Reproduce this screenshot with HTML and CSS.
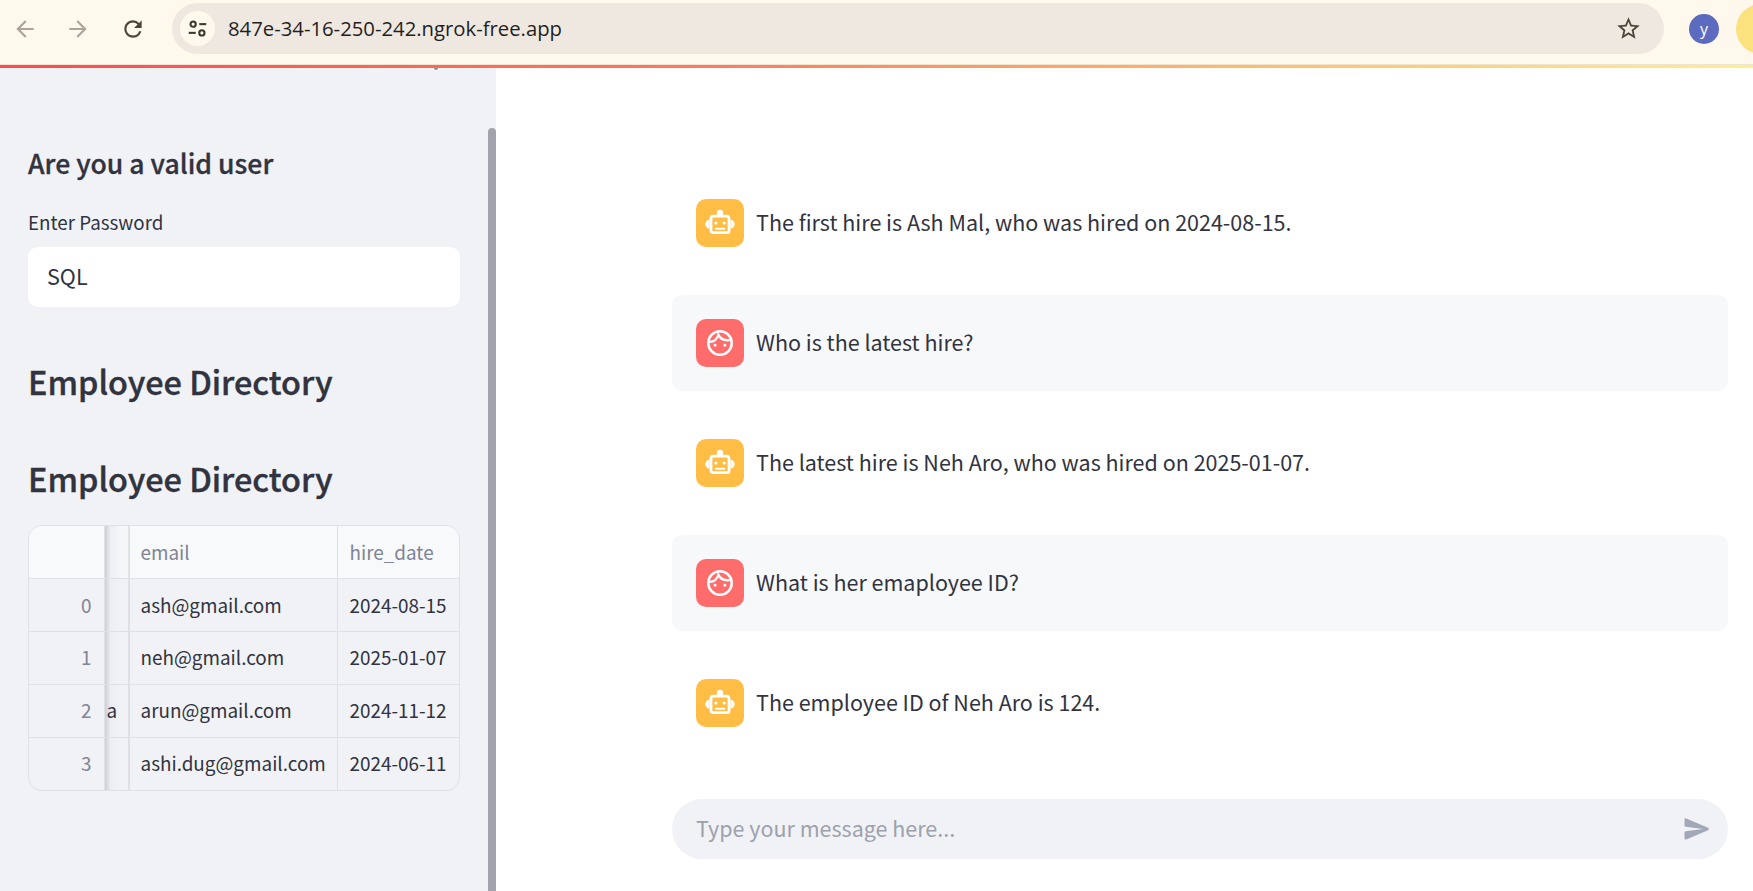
FILE: index.html
```html
<!DOCTYPE html>
<html lang="en">
<head>
<meta charset="UTF-8">
<title>Employee Directory</title>
<link rel="stylesheet" href="styles.css">
</head>
<body>
<header class="toolbar">
    <svg class="nav-icon dim" viewBox="0 0 24 24"><path d="M20 11H7.83l5.59-5.59L12 4l-8 8 8 8 1.41-1.41L7.83 13H20z"/></svg>
    <svg class="nav-icon dim" viewBox="0 0 24 24"><path d="M12 4l-1.41 1.41L16.17 11H4v2h12.17l-5.58 5.59L12 20l8-8z"/></svg>
    <svg class="nav-icon" viewBox="0 0 24 24"><path d="M17.65 6.35A7.958 7.958 0 0 0 12 4c-4.42 0-7.99 3.58-7.99 8s3.57 8 7.99 8c3.73 0 6.84-2.55 7.73-6h-2.08A5.99 5.99 0 0 1 12 18c-3.31 0-6-2.69-6-6s2.69-6 6-6c1.66 0 3.14.69 4.22 1.78L13 11h7V4l-2.35 2.35z"/></svg>
    <div class="omnibox">
        <span class="site-btn">
            <svg class="tune" viewBox="0 0 24 24"><circle cx="7" cy="7" r="3"/><path d="M14 7h8"/><circle cx="17" cy="17" r="3"/><path d="M2 17h8"/></svg>
        </span>
        <span class="url">847e-34-16-250-242.ngrok-free.app</span>
        <svg class="star" viewBox="0 0 24 24"><path d="M22 9.24l-7.19-.62L12 2 9.19 8.63 2 9.24l5.46 4.73L5.82 21 12 17.27 18.18 21l-1.63-7.03L22 9.24zM12 15.4l-3.76 2.27 1-4.28-3.32-2.88 4.38-.38L12 6.1l1.71 4.04 4.38.38-3.32 2.88 1 4.28L12 15.4z"/></svg>
    </div>
    <span class="profile">y</span>
    <span class="update-pill"></span>
</header>
<div class="deco-line"></div>

<div class="app">
    <aside class="sidebar">
        <span class="side-tip"></span>
        <div class="side-content">
            <h3 class="side-title">Are you a valid user</h3>
            <label class="field-label">Enter Password</label>
            <div class="text-input">SQL</div>
            <h2 class="dir-title first">Employee Directory</h2>
            <h2 class="dir-title second">Employee Directory</h2>
            <div class="table-wrap">
                <table class="emp-table">
                    <thead>
                        <tr><th class="idx"></th><th class="hidden-col"></th><th class="email">email</th><th class="date">hire_date</th></tr>
                    </thead>
                    <tbody>
                        <tr><td class="idx">0</td><td class="hidden-col"></td><td>ash@gmail.com</td><td class="date">2024-08-15</td></tr>
                        <tr><td class="idx">1</td><td class="hidden-col"></td><td>neh@gmail.com</td><td class="date">2025-01-07</td></tr>
                        <tr><td class="idx">2</td><td class="hidden-col"><span class="cut">a</span></td><td>arun@gmail.com</td><td class="date">2024-11-12</td></tr>
                        <tr><td class="idx">3</td><td class="hidden-col"></td><td>ashi.dug@gmail.com</td><td class="date">2024-06-11</td></tr>
                    </tbody>
                </table>
            </div>
        </div>
        <div class="side-scroll"></div>
    </aside>

    <main class="chat">
        <div class="msg bot one">
            <span class="avatar bot-av"><svg viewBox="0 0 24 24"><use href="#robot"/></svg></span>
            <p>The first hire is Ash Mal, who was hired on 2024-08-15.</p>
        </div>
        <div class="msg user">
            <span class="avatar user-av"><svg viewBox="0 0 24 24"><use href="#face"/></svg></span>
            <p>Who is the latest hire?</p>
        </div>
        <div class="msg bot">
            <span class="avatar bot-av"><svg viewBox="0 0 24 24"><use href="#robot"/></svg></span>
            <p>The latest hire is Neh Aro, who was hired on 2025-01-07.</p>
        </div>
        <div class="msg user">
            <span class="avatar user-av"><svg viewBox="0 0 24 24"><use href="#face"/></svg></span>
            <p>What is her emaployee ID?</p>
        </div>
        <div class="msg bot">
            <span class="avatar bot-av"><svg viewBox="0 0 24 24"><use href="#robot"/></svg></span>
            <p>The employee ID of Neh Aro is 124.</p>
        </div>
        <div class="chat-input">
            <span class="placeholder">Type your message here...</span>
            <svg class="send" viewBox="0 0 24 24"><path d="M3.4 20.4l17.45-7.48a1 1 0 0 0 0-1.84L3.4 3.6a.993.993 0 0 0-1.39.91L2 9.12c0 .5.37.93.87.99L17 12 2.87 13.88c-.5.07-.87.5-.87 1l.01 4.61c0 .71.73 1.2 1.39.91z"/></svg>
        </div>
    </main>
</div>

<svg class="defs" width="0" height="0">
    <symbol id="robot" viewBox="0 0 24 24">
        <circle cx="12" cy="5.6" r="2" fill="#fff"/>
        <rect x="6.3" y="7.7" width="11.4" height="10.4" rx="1.4" fill="none" stroke="#fff" stroke-width="1.8"/>
        <path d="M5.4 10v5.4a2.7 2.7 0 0 1 0-5.4zM18.6 10v5.4a2.7 2.7 0 0 0 0-5.4z" fill="#fff"/>
        <circle cx="9.4" cy="12" r="1" fill="#fff"/>
        <circle cx="14.6" cy="12" r="1" fill="#fff"/>
        <rect x="8.8" y="15" width="6.4" height="1.2" fill="#fff"/>
    </symbol>
    <symbol id="face" viewBox="0 0 24 24">
        <circle cx="12" cy="12" r="7.4" fill="none" stroke="#fff" stroke-width="1.6"/>
        <path d="M4.8 11.2c2.8.3 5.2-1.2 6.2-4.4 1.2 2.6 4 4 8 3.2" fill="none" stroke="#fff" stroke-width="1.5"/>
        <circle cx="8.9" cy="13.4" r=".9" fill="#fff"/>
        <circle cx="15.1" cy="13.4" r=".9" fill="#fff"/>
    </symbol>
</svg>
</body>
</html>
```

FILE: styles.css
```css
* {
    box-sizing: border-box;
}
html, body {
    margin: 0;
    height: 100%;
    overflow: hidden;
}
body {
    font-family: "Noto Sans CJK SC", "Noto Sans", sans-serif;
    color: #31333f;
    background: #ffffff;
}

/* browser chrome */
.toolbar {
    display: flex;
    align-items: center;
    height: 65px;
    padding: 0 0 7px 12px;
    background: #fff8ec;
    border-bottom: 1px solid #eee4d6;
    overflow: hidden;
}
.nav-icon {
    flex: none;
    width: 26px;
    height: 26px;
    margin-right: 27px;
    fill: #4a4538;
}
.nav-icon.dim {
    fill: #aaa69b;
}
.nav-icon:nth-child(3) {
    margin-left: 2px;
    margin-right: 27px;
}
.omnibox {
    display: flex;
    align-items: center;
    flex: none;
    width: 1492px;
    height: 51px;
    margin-left: -1px;
    padding: 0 22px 0 8px;
    border-radius: 26px;
    background: #efe8e1;
}
.site-btn {
    display: flex;
    align-items: center;
    justify-content: center;
    width: 35px;
    height: 35px;
    border-radius: 50%;
    background: #fff8ec;
}
.tune {
    width: 21px;
    height: 21px;
    fill: none;
    stroke: #3c3a30;
    stroke-width: 2.4;
}
.url {
    flex: 1;
    margin: 0 0 1px 13px;
    font-family: "Open Sans", sans-serif;
    font-size: 20.3px;
    color: #1f1f1f;
}
.star {
    width: 27px;
    height: 27px;
    fill: #4a4538;
}
.profile {
    display: flex;
    align-items: center;
    justify-content: center;
    flex: none;
    width: 30px;
    height: 30px;
    margin-left: 25px;
    border-radius: 50%;
    background: #5c6bc0;
    color: #ffffff;
    font-family: "Open Sans", sans-serif;
    font-size: 16px;
}
.update-pill {
    flex: none;
    width: 50px;
    height: 50px;
    margin-left: 17px;
    border-radius: 25px;
    background: #fce17f;
}
.deco-line {
    height: 3px;
    background: linear-gradient(90deg, #ff4b4b, #fd7a5a 40%, #ffc46a 75%, #fff08a);
}

.app {
    display: flex;
    height: 823px;
}

/* sidebar */
.sidebar {
    position: relative;
    display: flex;
    flex: none;
    width: 496px;
    background: #f0f2f6;
}
.side-tip {
    position: absolute;
    top: 0;
    left: 434px;
    width: 4px;
    height: 2px;
    background: #8f8f96;
    border-radius: 0 0 2px 2px;
}
.side-content {
    flex: 1;
    padding: 75px 0 0 28px;
}
.side-scroll {
    flex: none;
    width: 8px;
    margin-top: 60px;
    background: #a3a3ad;
    border-radius: 4px 4px 0 0;
}
.side-title {
    margin: 0;
    font-size: 26.6px;
    line-height: 40px;
    font-weight: 500;
    -webkit-text-stroke: 0.3px #31333f;
}
.field-label {
    display: block;
    margin-top: 26px;
    font-size: 18.8px;
    line-height: 26px;
}
.text-input {
    width: 432px;
    height: 60px;
    margin-top: 12px;
    padding: 0 0 1px 19px;
    border-radius: 10px;
    background: #ffffff;
    font-size: 21.6px;
    line-height: 58px;
}
.dir-title {
    margin: 0;
    font-size: 32.4px;
    line-height: 48px;
    font-weight: 500;
    -webkit-text-stroke: 0.4px #31333f;
}
.dir-title.first {
    margin-top: 50px;
}
.dir-title.second {
    margin-top: 49px;
}
.table-wrap {
    width: 432px;
    height: 266px;
    margin-top: 23px;
    border: 1px solid #dfe1e7;
    border-radius: 14px;
    overflow: hidden;
}
.emp-table {
    width: 430px;
    table-layout: fixed;
    border-collapse: collapse;
    font-size: 18.9px;
}
.emp-table th, .emp-table td {
    height: 52.8px;
    padding: 0 0 2px 11px;
    border-left: 1px solid #dfe1e7;
    border-top: 1px solid #dfe1e7;
    text-align: left;
    font-weight: 400;
    white-space: nowrap;
    overflow: hidden;
}
.emp-table thead th {
    border-top: 0;
    background: #f8f9fb;
    color: #808495;
}
.emp-table .idx {
    width: 75px;
    padding: 0 12px 2px 0;
    border-left: 0;
    text-align: right;
    color: #808495;
}
.emp-table .hidden-col {
    width: 25px;
    padding: 0 0 2px;
    background: linear-gradient(90deg, #c9cbd2, #eceef2 25%, #f0f2f6 70%);
    border-right: 1px solid #dfe1e7;
}
.emp-table thead .hidden-col {
    background: linear-gradient(90deg, #c9cbd2, #eceef2 25%, #f5f6f8 70%);
}
.emp-table .email {
    width: 208px;
}
.emp-table .date {
    padding-left: 12px;
}
.cut {
    display: inline-block;
    line-height: 1.1;
    padding-left: 1px;
    border-left: 1px solid #b8dce2;
}

/* chat column */
.chat {
    flex: 1;
    padding: 0 25px 0 176px;
}
.msg {
    display: flex;
    align-items: center;
    gap: 12px;
    height: 96px;
    margin-bottom: 24px;
    padding: 0 24px;
    border-radius: 10px;
}
.msg.one {
    margin-top: 107px;
}
.msg.user {
    background: #f7f8fa;
}
.msg p {
    margin: 0 0 2px;
    font-size: 21.5px;
    line-height: 34px;
}
.avatar {
    display: flex;
    align-items: center;
    justify-content: center;
    flex: none;
    width: 48px;
    height: 48px;
    border-radius: 10px;
}
.avatar svg {
    width: 38px;
    height: 38px;
}
.bot-av {
    background: #ffbd45;
}
.user-av {
    background: #ff6c6c;
}
.chat-input {
    display: flex;
    align-items: center;
    justify-content: space-between;
    height: 60px;
    margin-top: 48px;
    padding: 0 16px 0 24px;
    border-radius: 30px;
    background: #f0f2f6;
}
.placeholder {
    margin-bottom: 4px;
    font-size: 21.5px;
    color: #9da1ac;
}
.send {
    width: 30px;
    height: 30px;
    fill: #a3a8b8;
}
.defs {
    display: block;
    height: 0;
}
```
